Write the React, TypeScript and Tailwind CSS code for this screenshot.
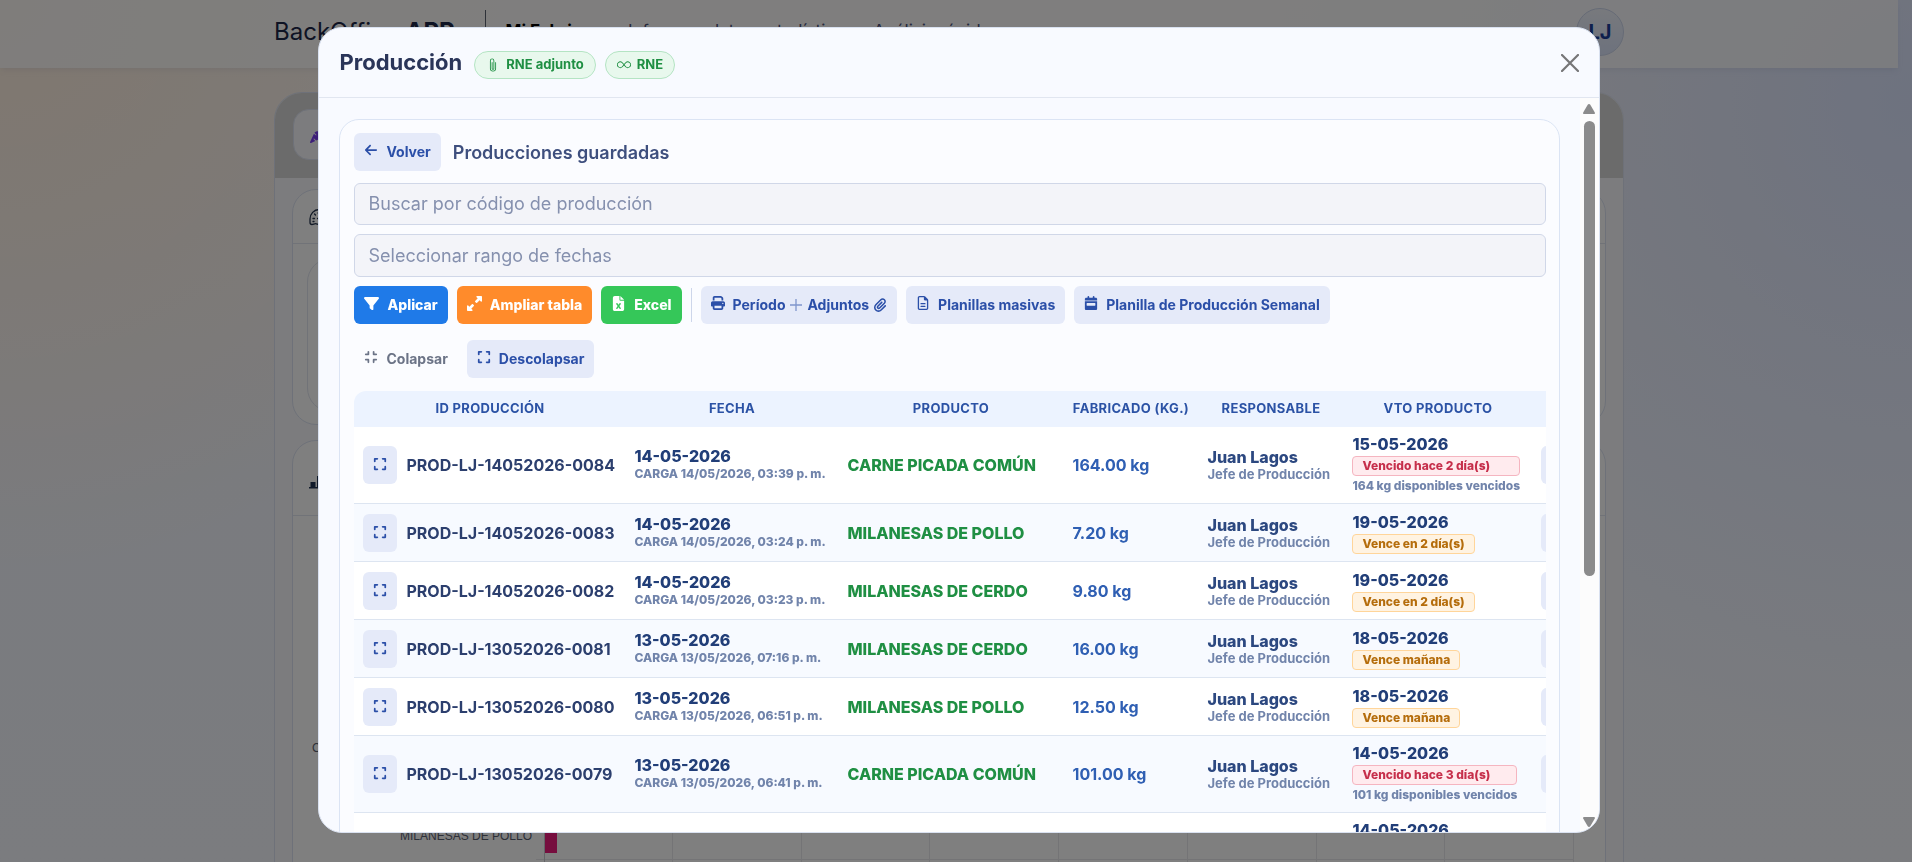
import { ReactNode, useState } from "react"
import { BsInfinity, BsPaperclip } from "react-icons/bs"
import {
    FaArrowLeft,
    FaCalendarWeek,
    FaCarrot,
    FaCompress,
    FaExpand,
    FaFileExcel,
    FaFilter,
    FaPaperclip,
    FaPrint,
    FaRegFileLines,
    FaUpRightAndDownLeftFromCenter,
} from "react-icons/fa6"
import clsx from "clsx"

type TProduccion = {
    id: string
    fecha: string
    carga: string
    producto: string
    kilos: string
    vencimiento: string
    aviso: string
    vencidos?: string
}

const producciones: TProduccion[] = [
    { id: "PROD-LJ-14052026-0084", fecha: "14-05-2026", carga: "14/05/2026, 03:39 p. m.", producto: "CARNE PICADA COMÚN", kilos: "164.00", vencimiento: "15-05-2026", aviso: "Vencido hace 2 día(s)", vencidos: "164" },
    { id: "PROD-LJ-14052026-0083", fecha: "14-05-2026", carga: "14/05/2026, 03:24 p. m.", producto: "MILANESAS DE POLLO", kilos: "7.20", vencimiento: "19-05-2026", aviso: "Vence en 2 día(s)" },
    { id: "PROD-LJ-14052026-0082", fecha: "14-05-2026", carga: "14/05/2026, 03:23 p. m.", producto: "MILANESAS DE CERDO", kilos: "9.80", vencimiento: "19-05-2026", aviso: "Vence en 2 día(s)" },
    { id: "PROD-LJ-13052026-0081", fecha: "13-05-2026", carga: "13/05/2026, 07:16 p. m.", producto: "MILANESAS DE CERDO", kilos: "16.00", vencimiento: "18-05-2026", aviso: "Vence mañana" },
    { id: "PROD-LJ-13052026-0080", fecha: "13-05-2026", carga: "13/05/2026, 06:51 p. m.", producto: "MILANESAS DE POLLO", kilos: "12.50", vencimiento: "18-05-2026", aviso: "Vence mañana" },
    { id: "PROD-LJ-13052026-0079", fecha: "13-05-2026", carga: "13/05/2026, 06:41 p. m.", producto: "CARNE PICADA COMÚN", kilos: "101.00", vencimiento: "14-05-2026", aviso: "Vencido hace 3 día(s)", vencidos: "101" },
    { id: "PROD-LJ-13052026-0078", fecha: "13-05-2026", carga: "13/05/2026, 06:30 p. m.", producto: "CARNE PICADA COMÚN", kilos: "85.00", vencimiento: "14-05-2026", aviso: "Vencido hace 3 día(s)", vencidos: "85" },
]

interface IToolButtonProps {
    icon: ReactNode
    children: ReactNode
    className?: string
}

function ToolButton({ icon, children, className = "bg-[#e5eaf9] text-[#2b4fa8] font-bold" }: IToolButtonProps) {
    return (
        <button type="button" className={clsx("flex h-[38px] items-center gap-2 rounded-md px-[10px] text-sm cursor-pointer", className)}>
            <span className="pb-1">{icon}</span>
            <span className="flex items-center gap-1">{children}</span>
        </button>
    )
}

function HeaderBadge({ icon, children }: { icon: ReactNode, children: ReactNode }) {
    return (
        <span className="flex h-7 items-center gap-[6px] rounded-full border border-[#b4e4c3] bg-[#e8f8ed] px-[11px] text-[13px] font-bold text-[#1f8f43]">
            {icon}
            {children}
        </span>
    )
}

function Background() {
    return (
        <div className="h-screen overflow-hidden bg-[radial-gradient(circle_at_100%_12%,#dce5ff_0,transparent_32%),radial-gradient(circle_at_0_0,#ffefdf_0,transparent_28%),linear-gradient(#fbf7f4,#f4f7ff_55%,#f6f8ff)]">
            <div className="mr-[14px]">
                <header className="h-[68px] bg-white/75 shadow-md shadow-slate-400/10">
                    <div className="mx-auto flex h-[64px] max-w-[1350px] items-center">
                        <a href="#" className="text-2xl text-[#1c2748]">BackOffice <b>APP</b></a>
                        <span className="ml-[30px] h-11 w-px bg-[#5c6270]" />
                        <p className="ml-5 text-[17px] text-[#4a527c]">
                            <b className="mr-9 text-black">Mi Fabrica</b>
                            Informes, datos estadísticos y Análisis rápidos
                        </p>
                        <span className="ml-auto flex size-12 items-center justify-center rounded-full border border-[#cdd6ec] bg-linear-to-b from-[#f0f3fb] to-[#dbe4fb] text-xl font-bold text-[#1c3f9a]">LJ</span>
                    </div>
                </header>
                <main className="mx-auto mt-6 max-w-[1350px] overflow-hidden rounded-t-[28px] border border-[#dde3f2] bg-[#f8f9fc]">
                    <div className="bg-[#d6d6d6] px-[18px] pt-4 pb-[18px]">
                        <button type="button" aria-label="Producción" className="flex h-[51px] w-60 items-center rounded-2xl border border-[#dde3f2] bg-[#f8f9fc] px-4">
                            <FaCarrot size={16} className="text-[#7b3ff2]" />
                        </button>
                    </div>
                    <div className="flex flex-col gap-[15px] px-[17px] pt-[11px]">
                        <section className="h-[236px] rounded-3xl border border-[#dde3f2] bg-[#fefefe]">
                            <div className="flex h-[54px] items-center border-b border-[#e2e6f0] px-4">
                                <svg viewBox="0 0 18 18" className="size-[18px]" fill="none" stroke="#24344f" strokeWidth="1.3" strokeLinecap="round">
                                    <path d="M10 1.500C5 1.500 1 6 1 11v3.500c0 1.500.8 2 2 2 1.500 0 2-.8 3.500-.8s2 .8 4 .8C14.500 16.500 17 13 17 9s-3-7.500-7-7.500z" />
                                    <path d="M5.500 6l1 1M4 10.500h1.500M8.500 10.500h1.500M9 5l1 1M4 13.500h1" />
                                </svg>
                            </div>
                            <div className="m-[14px] h-[154px] rounded-3xl border border-[#e2e6f0]" />
                        </section>
                        <section className="h-[600px] rounded-3xl border border-[#dde3f2] bg-white">
                            <div className="flex h-[75px] items-center border-b border-[#e2e6f0] px-4 pt-2">
                                <svg viewBox="0 0 18 16" className="h-4 w-[18px]" fill="#1f3355">
                                    <path d="M0 13h18v1.500H0zM1.500 8h5v6h-5zM8 2h4v12H8zM13 5h4v9h-4z" />
                                </svg>
                            </div>
                            <svg className="h-[346px] w-full" aria-label="Producción por producto">
                                <g fontSize="12" fontFamily="Liberation Sans, sans-serif" fill="#5a6172">
                                    <text x="19" y="236">CARNE PICADA COMÚN</text>
                                    <text x="239" y="324" textAnchor="end">MILANESAS DE POLLO</text>
                                </g>
                                <g fill="#e9e9ec">
                                    <path d="M379 0h1v346h-1zM508 0h1v346h-1zM636 0h1v346h-1zM765 0h1v346h-1zM894 0h1v346h-1zM1023 0h1v346h-1zM1151 0h1v346h-1zM1280 0h1v346h-1zM243 343h1038v1H243z" />
                                </g>
                                <path d="M251 0h1v346h-1z" fill="#c9c9cf" />
                                <path d="M252 300h12v37h-12z" fill="#ec1a7c" />
                            </svg>
                        </section>
                    </div>
                </main>
            </div>
        </div>
    )
}

function ProduccionRow({ item }: { item: TProduccion }) {
    return (
        <tr className="border-b border-[#dde5f1] odd:bg-white even:bg-[#f7faff]">
            <td className="px-[9px]">
                <div className="flex items-center gap-[9px] font-bold text-[#2c3f6e]">
                    <button type="button" aria-label={`Expandir ${item.id}`} className="flex h-[38px] w-[34px] items-center justify-center rounded-md bg-[#e5eaf9] pb-[2px] text-[#2b4fa8]">
                        <FaExpand size={14} />
                    </button>
                    {item.id}
                </div>
            </td>
            <td className="px-[9px]">
                <div className="font-extrabold leading-[18px] text-[#213e78]">{item.fecha}</div>
                <div className="mt-px pb-px text-xs font-extrabold leading-4 text-[#7184ab]">CARGA {item.carga}</div>
            </td>
            <td className="px-[9px] font-extrabold text-[#1f8f43]">{item.producto}</td>
            <td className="px-[9px] font-bold text-[#2f5fb3]">{item.kilos} kg</td>
            <td className="px-[9px]">
                <div className="font-extrabold leading-[18px] text-[#2c4880]">Juan Lagos</div>
                <div className="text-[13px] font-bold leading-4 text-[#7184ab]">Jefe de Producción</div>
            </td>
            <td className={clsx("px-[9px]", item.vencidos ? "pt-[6px] pb-[9px]" : "py-[7px]")}>
                <div className="flex w-fit flex-col gap-px">
                    <span className="font-extrabold leading-[22px] text-[#213e78]">{item.vencimiento}</span>
                    <span className={clsx(
                        "rounded border px-[9px] text-xs font-extrabold leading-[18px]",
                        item.vencidos ? "border-[#f5b5c0] bg-[#ffebee] text-[#c62f4b]" : "border-[#ffd59a] bg-[#fff3e2] text-[#b56d0c]"
                    )}>
                        {item.aviso}
                    </span>
                    {item.vencidos && <span className="text-xs font-extrabold leading-[17px] text-[#7184ab]">{item.vencidos} kg disponibles vencidos</span>}
                </div>
            </td>
            <td className="px-[9px]">
                <button type="button" aria-label={`Acciones ${item.id}`} className="block h-[38px] w-[120px] rounded-md bg-[#e5eaf9]" />
            </td>
        </tr>
    )
}

export default function App() {

    const [codigo, setCodigo] = useState('')
    const [rango, setRango] = useState('')

    return (
        <div className="font-['Inter',sans-serif]">
            <Background />
            <div className="fixed inset-0 flex items-center justify-center bg-black/50 pb-[2px] pl-[6px]">
                <div role="dialog" aria-label="Producción" className="flex h-[calc(100vh-56px)] w-[67vw] flex-col overflow-hidden rounded-3xl border border-[#d9e1f0] bg-[#f8faff]">
                    <div className="flex h-[70px] shrink-0 items-center border-b border-[#e1e6f0] px-5">
                        <h1 className="text-[22px] font-bold text-[#2a3559]">Producción</h1>
                        <div className="ml-3 flex gap-[9px] pt-1">
                            <HeaderBadge icon={<BsPaperclip size={14} />}>RNE adjunto</HeaderBadge>
                            <HeaderBadge icon={<BsInfinity size={14} />}>RNE</HeaderBadge>
                        </div>
                        <button type="button" aria-label="Cerrar" className="ml-auto cursor-pointer">
                            <svg viewBox="0 0 18 18" className="size-[18px]" stroke="#757577" strokeWidth="2.2" strokeLinecap="round">
                                <path d="M1 1l16 16M17 1L1 17" />
                            </svg>
                        </button>
                    </div>
                    <div className="flex min-h-0 flex-1">
                        <div className="min-w-0 flex-1 overflow-hidden px-5 pt-[21px]">
                            <section className="rounded-[20px] border border-[#dbe4f4] bg-[#fbfcff] py-[13px] pl-[14px] pr-[13px]">
                                <div className="flex items-center gap-3">
                                    <ToolButton icon={<FaArrowLeft size={14} />}>Volver</ToolButton>
                                    <h2 className="pt-[2px] text-lg font-semibold text-[#3e4f7e]">Producciones guardadas</h2>
                                </div>
                                <div className="mt-3 flex flex-col gap-[9px]">
                                    <input
                                        aria-label="Buscar por código de producción"
                                        placeholder="Buscar por código de producción"
                                        value={codigo}
                                        onChange={event => setCodigo(event.target.value)}
                                        className="h-[42px] rounded-md border border-[#d0d7e8] bg-[#f3f4f9] px-[13px] pb-[2px] text-lg placeholder:text-[#8590ae]"
                                    />
                                    <input
                                        aria-label="Seleccionar rango de fechas"
                                        placeholder="Seleccionar rango de fechas"
                                        value={rango}
                                        onChange={event => setRango(event.target.value)}
                                        className="h-[43px] rounded-md border border-[#d0d7e8] bg-[#f3f4f9] px-[13px] text-lg placeholder:text-[#8590ae]"
                                    />
                                </div>
                                <div className="mt-[9px] flex flex-wrap items-center gap-[9px]">
                                    <ToolButton className="bg-[#1f7ae8] font-extrabold text-white" icon={<FaFilter size={15} />}>Aplicar</ToolButton>
                                    <ToolButton className="bg-[#ff8b2b] font-extrabold text-white" icon={<FaUpRightAndDownLeftFromCenter size={15} />}>Ampliar tabla</ToolButton>
                                    <ToolButton className="bg-[#35c759] font-extrabold text-white" icon={<FaFileExcel size={15} />}>Excel</ToolButton>
                                    <span className="h-[34px] w-px bg-[#cdd6ea]" />
                                    <ToolButton icon={<FaPrint size={14} />}>
                                        Período
                                        <svg viewBox="0 0 14 14" className="size-[14px]" stroke="#7f95cc" strokeWidth="1.3">
                                            <path d="M7 1v12M1 7h12" />
                                        </svg>
                                        Adjuntos
                                        <FaPaperclip size={14} />
                                    </ToolButton>
                                    <ToolButton icon={<FaRegFileLines size={14} />}>Planillas masivas</ToolButton>
                                    <ToolButton icon={<FaCalendarWeek size={14} />}>Planilla de Producción Semanal</ToolButton>
                                </div>
                                <div className="mt-4 flex gap-[9px]">
                                    <ToolButton className="font-bold text-[#6c7487]" icon={<FaCompress size={14} />}>Colapsar</ToolButton>
                                    <ToolButton icon={<FaExpand size={14} />}>Descolapsar</ToolButton>
                                </div>
                                <div className="mt-[13px] overflow-hidden rounded-tl-xl">
                                    <table className="w-[1340px] table-fixed border-collapse text-left text-base whitespace-nowrap">
                                        <thead>
                                            <tr className="h-9 bg-[#ecf3ff] text-center text-[13px] tracking-wide text-[#2b52a5]">
                                                <th className="w-[271px] font-bold">ID PRODUCCIÓN</th>
                                                <th className="w-[213px] font-bold">FECHA</th>
                                                <th className="w-[225px] font-bold">PRODUCTO</th>
                                                <th className="w-[135px] font-bold">FABRICADO (KG.)</th>
                                                <th className="w-[145px] font-bold">RESPONSABLE</th>
                                                <th className="w-[189px] font-bold">VTO PRODUCTO</th>
                                                <th className="font-bold">ACCIONES</th>
                                            </tr>
                                        </thead>
                                        <tbody>
                                            {producciones.map(item => <ProduccionRow key={item.id} item={item} />)}
                                        </tbody>
                                    </table>
                                </div>
                            </section>
                        </div>
                        <div className="flex w-[19px] flex-col items-center bg-[#fcfcfc] pt-[6px] pb-[5px]">
                            <svg viewBox="0 0 12 10" className="h-[10px] w-3" fill="#8b8b8b"><path d="M6 0q.8 0 1.300.8L11.800 8.500Q12.200 10 11 10H1Q-.2 10 .2 8.500L4.700.8Q5.200 0 6 0z" /></svg>
                            <div className="mt-[7px] h-[63%] w-[11px] rounded-full bg-[#8b8b8b]" />
                            <svg viewBox="0 0 12 10" className="mt-auto h-[10px] w-3" fill="#8b8b8b"><path d="M6 10q.8 0 1.300-.8L11.800 1.500Q12.200 0 11 0H1Q-.2 0 .2 1.500L4.700 9.200Q5.200 10 6 10z" /></svg>
                        </div>
                    </div>
                </div>
            </div>
        </div>
    )
}
